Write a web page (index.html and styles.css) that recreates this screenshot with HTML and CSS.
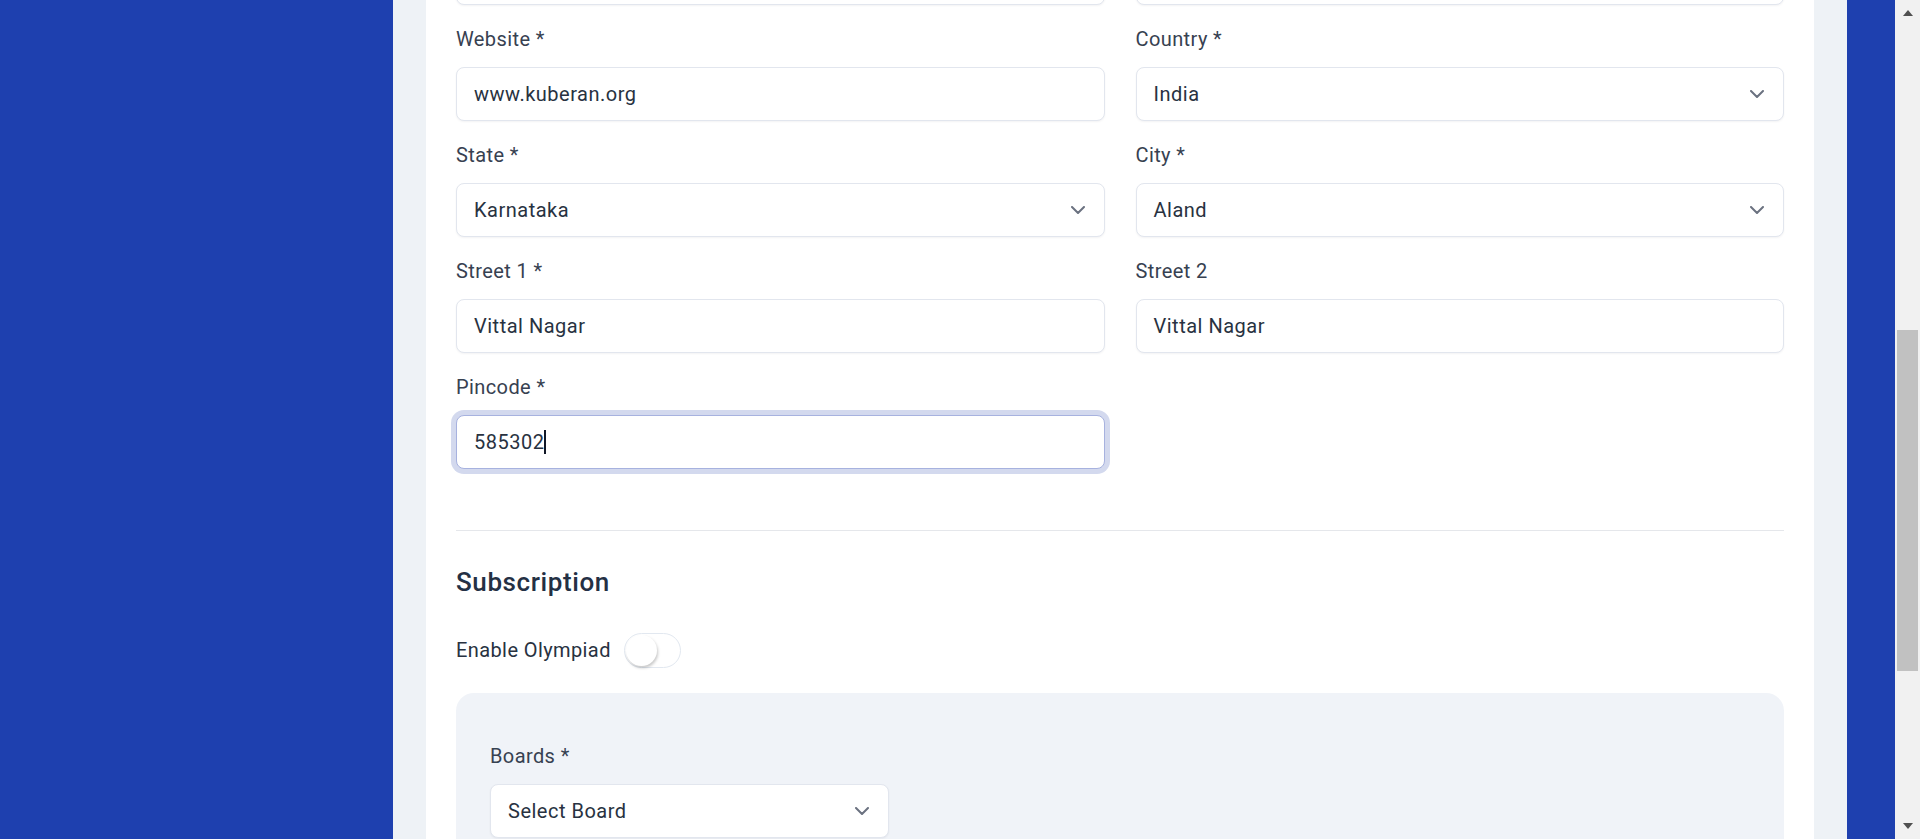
FILE: index.html
```html
<!DOCTYPE html>
<html lang="en">
<head>
<meta charset="utf-8">
<title>Organisation details</title>
<link rel="stylesheet" href="styles.css">
</head>
<body>
<div class="app">
  <aside class="sidebar"></aside>
  <main class="main">
    <section class="card">
      <div class="form-grid">
        <div class="field">
          <div class="input"></div>
        </div>
        <div class="field">
          <div class="input"></div>
        </div>
        <div class="field">
          <label class="label">Website *</label>
          <div class="input">www.kuberan.org</div>
        </div>
        <div class="field">
          <label class="label">Country *</label>
          <div class="input select"><span>India</span><svg class="chev" viewBox="0 0 14 8"><path d="M1 1l6 6 6-6"/></svg></div>
        </div>
        <div class="field">
          <label class="label">State *</label>
          <div class="input select"><span>Karnataka</span><svg class="chev" viewBox="0 0 14 8"><path d="M1 1l6 6 6-6"/></svg></div>
        </div>
        <div class="field">
          <label class="label">City *</label>
          <div class="input select"><span>Aland</span><svg class="chev" viewBox="0 0 14 8"><path d="M1 1l6 6 6-6"/></svg></div>
        </div>
        <div class="field">
          <label class="label">Street 1 *</label>
          <div class="input">Vittal Nagar</div>
        </div>
        <div class="field">
          <label class="label">Street 2</label>
          <div class="input">Vittal Nagar</div>
        </div>
        <div class="field">
          <label class="label">Pincode *</label>
          <div class="input focused">585302<span class="caret"></span></div>
        </div>
      </div>

      <hr class="divider">

      <h2 class="section-title">Subscription</h2>

      <div class="toggle-row">
        <span class="toggle-label">Enable Olympiad</span>
        <span class="toggle"><span class="knob"></span></span>
      </div>

      <div class="panel">
        <div class="field board-field">
          <label class="label">Boards *</label>
          <div class="input select"><span>Select Board</span><svg class="chev" viewBox="0 0 14 8"><path d="M1 1l6 6 6-6"/></svg></div>
        </div>
      </div>
    </section>
  </main>
  <aside class="rightbar"></aside>
  <div class="scrollbar">
    <div class="sb-btn"><span class="tri-up"></span></div>
    <div class="sb-track"><div class="sb-thumb" style="margin-top: 304px; height: 341px;"></div></div>
    <div class="sb-btn"><span class="tri-down"></span></div>
  </div>
</div>
</body>
</html>
```

FILE: styles.css
```css
* { box-sizing: border-box; }

html, body {
  margin: 0;
  padding: 0;
  height: 839px;
  overflow: hidden;
  font-family: Roboto, "Liberation Sans", Arial, sans-serif;
}

.app {
  display: flex;
  height: 839px;
}

.sidebar {
  width: 393px;
  flex: none;
  background: #1e40af;
}

.main {
  flex: 1;
  background: #eef2f6;
  padding: 0 33px;
  overflow: hidden;
}

.card {
  background: #ffffff;
  min-height: 1200px;
  padding: 0 30px;
}

.form-grid {
  display: grid;
  grid-template-columns: 1fr 1fr;
  column-gap: 31px;
  row-gap: 20px;
  margin-top: -49px;
  align-items: end;
}

.field {
  display: flex;
  flex-direction: column;
}

.label {
  font-size: 20px;
  line-height: 28px;
  letter-spacing: 0.4px;
  color: #374151;
  margin-bottom: 14px;
}

.input {
  height: 54px;
  border: 1px solid #e2e6ee;
  border-radius: 8px;
  background: #fff;
  box-shadow: 0 1px 2px rgba(15, 23, 42, 0.05);
  padding: 0 19px 0 17px;
  display: flex;
  align-items: center;
  font-size: 20px;
  letter-spacing: 0.5px;
  color: #283241;
}

.select {
  justify-content: space-between;
}

.chev {
  width: 14px;
  height: 8px;
  flex: none;
}
.chev path {
  fill: none;
  stroke: #6b7280;
  stroke-width: 2;
  stroke-linecap: round;
  stroke-linejoin: round;
}

.focused {
  border-color: #a7b2df;
  box-shadow: 0 0 0 5px #d3d9ee;
}

.caret {
  display: inline-block;
  width: 2px;
  height: 24px;
  background: #111827;
}

.divider {
  border: 0;
  border-top: 1px solid #e5e7eb;
  margin: 61px 0 0;
}

.section-title {
  margin: 34px 0 0;
  font-size: 26px;
  line-height: 35px;
  font-weight: 500;
  letter-spacing: 0.6px;
  color: #243044;
}

.toggle-row {
  display: flex;
  align-items: center;
  gap: 13px;
  margin-top: 32px;
  height: 36px;
}

.toggle-label {
  font-size: 20px;
  letter-spacing: 0.4px;
  color: #283241;
}

.toggle {
  width: 57px;
  height: 35px;
  border: 1px solid #e2e8f0;
  border-radius: 18px;
  background: #fff;
  display: flex;
  align-items: center;
  padding-left: 1px;
}

.knob {
  width: 31px;
  height: 31px;
  border-radius: 50%;
  background: #fff;
  box-shadow: 1px 2px 3px rgba(0, 0, 0, 0.22);
}

.panel {
  margin-top: 25px;
  background: #f0f3f8;
  border-radius: 18px;
  padding: 49px 34px 40px;
  min-height: 300px;
}

.board-field {
  width: 399px;
}

.rightbar {
  width: 48px;
  flex: none;
  background: #1e40af;
}

.scrollbar {
  width: 25px;
  flex: none;
  background: #f1f1f1;
  display: flex;
  flex-direction: column;
}

.sb-btn {
  height: 26px;
  flex: none;
  display: flex;
  align-items: center;
  justify-content: center;
}

.sb-track {
  flex: 1;
  padding: 0 2px;
}

.sb-thumb {
  background: #c1c1c1;
}

.tri-up, .tri-down {
  width: 0;
  height: 0;
  border-left: 5.5px solid transparent;
  border-right: 5.5px solid transparent;
}
.tri-up { border-bottom: 6px solid #505050; }
.tri-down { border-top: 6px solid #505050; }
```
